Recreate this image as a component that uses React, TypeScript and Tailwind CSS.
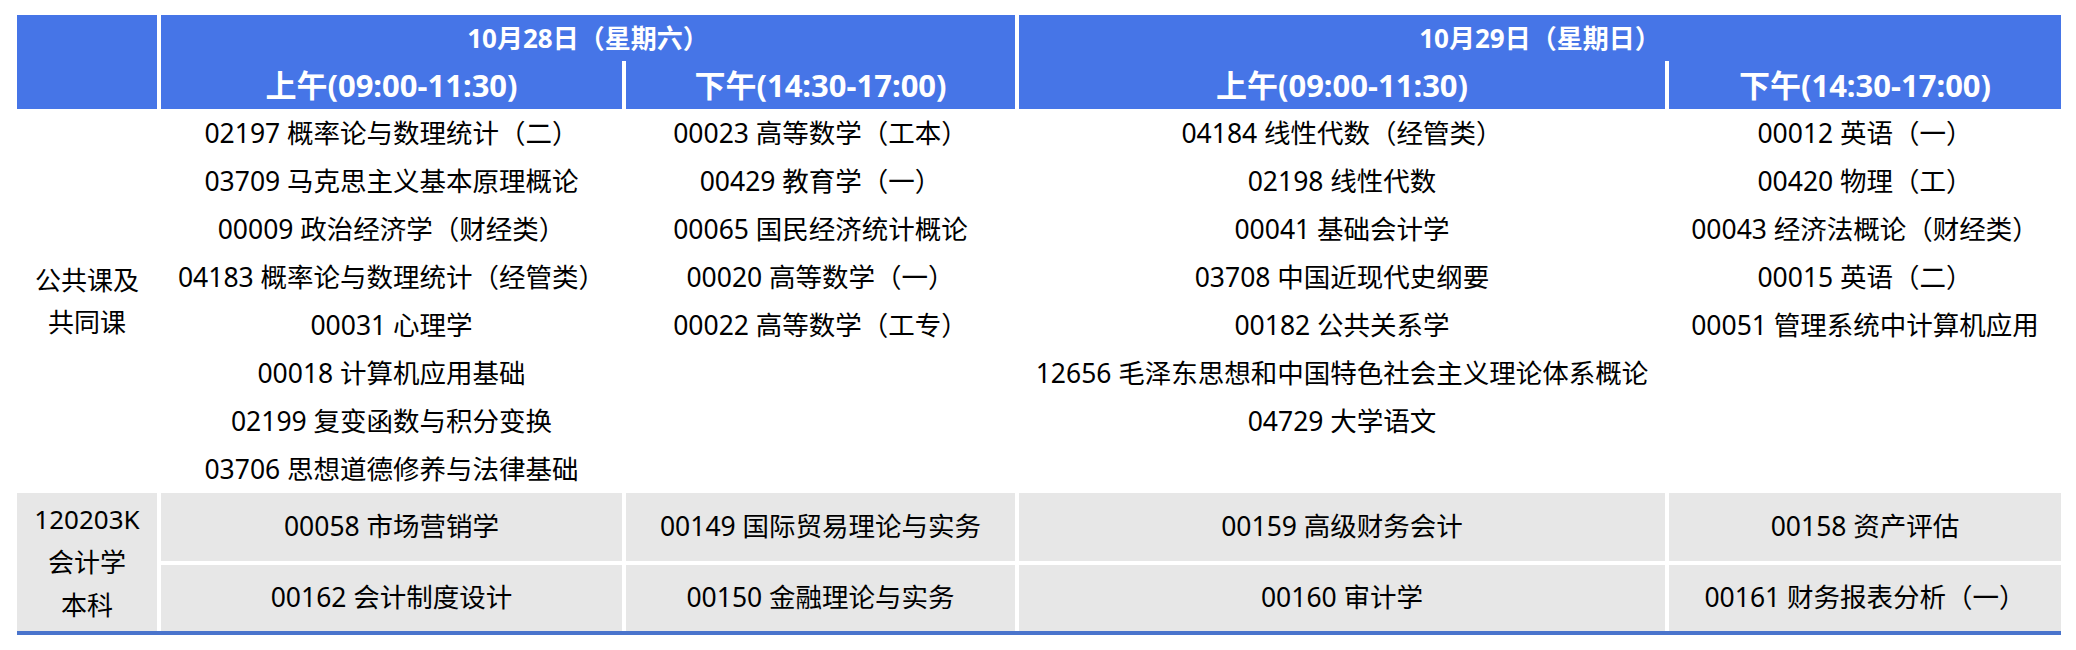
const days = [
  {
    date: '10月28日（星期六）',
    am: [
      '02197 概率论与数理统计（二）',
      '03709 马克思主义基本原理概论',
      '00009 政治经济学（财经类）',
      '04183 概率论与数理统计（经管类）',
      '00031 心理学',
      '00018 计算机应用基础',
      '02199 复变函数与积分变换',
      '03706 思想道德修养与法律基础',
    ],
    pm: [
      '00023 高等数学（工本）',
      '00429 教育学（一）',
      '00065 国民经济统计概论',
      '00020 高等数学（一）',
      '00022 高等数学（工专）',
    ],
  },
  {
    date: '10月29日（星期日）',
    am: [
      '04184 线性代数（经管类）',
      '02198 线性代数',
      '00041 基础会计学',
      '03708 中国近现代史纲要',
      '00182 公共关系学',
      '12656 毛泽东思想和中国特色社会主义理论体系概论',
      '04729 大学语文',
    ],
    pm: [
      '00012 英语（一）',
      '00420 物理（工）',
      '00043 经济法概论（财经类）',
      '00015 英语（二）',
      '00051 管理系统中计算机应用',
    ],
  },
];

const majorRows = [
  ['00058 市场营销学', '00149 国际贸易理论与实务', '00159 高级财务会计', '00158 资产评估'],
  ['00162 会计制度设计', '00150 金融理论与实务', '00160 审计学', '00161 财务报表分析（一）'],
];

const CourseList = ({ items }: { items: string[] }) => (
  <div className="flex flex-col items-center">
    {items.map((item) => (
      <p key={item} className="whitespace-nowrap text-[26.5px] leading-[48px]">
        {item}
      </p>
    ))}
  </div>
);

export default function App() {
  return (
    <div className="min-h-screen bg-white pl-[17px] pt-[15px] font-['Noto_Sans','Noto_Sans_CJK_SC',sans-serif] text-black">
      <div className="w-[2044px] border-b-4 border-[#4a74cc]">
        <div className="grid grid-cols-[140px_461px_389px_646px_392px] grid-rows-[46px_48px_384px_68px_4px_66px] gap-x-1">
          {/* header */}
          <div className="row-span-2 bg-[#4675e7]" />
          <div className="col-span-2 flex items-center justify-center bg-[#4675e7] text-[26px] font-bold text-white">
            {days[0].date}
          </div>
          <div className="col-span-2 flex items-center justify-center bg-[#4675e7] text-[26px] font-bold text-white">
            {days[1].date}
          </div>
          {days.map((day) => (
            <>
              <div key={day.date + 'am'} className="flex items-center justify-center bg-[#4675e7] text-[31px] font-bold text-white">
                上午(09:00-11:30)
              </div>
              <div key={day.date + 'pm'} className="flex items-center justify-center bg-[#4675e7] text-[31px] font-bold text-white">
                下午(14:30-17:00)
              </div>
            </>
          ))}

          {/* public courses */}
          <div className="flex items-center justify-center text-center text-[26px] leading-[42px]">
            <p>
              公共课及
              <br />
              共同课
            </p>
          </div>
          <CourseList items={days[0].am} />
          <CourseList items={days[0].pm} />
          <CourseList items={days[1].am} />
          <CourseList items={days[1].pm} />

          {/* major courses */}
          <div className="row-span-3 flex items-center justify-center bg-[#e7e7e7] text-center text-[26px] leading-[43px]">
            <p>
              120203K
              <br />
              会计学
              <br />
              本科
            </p>
          </div>
          {majorRows[0].map((course) => (
            <div key={course} className="flex items-center justify-center bg-[#e7e7e7] text-[26.5px]">
              {course}
            </div>
          ))}
          <div className="col-span-4" />
          {majorRows[1].map((course) => (
            <div key={course} className="flex items-center justify-center bg-[#e7e7e7] text-[26.5px]">
              {course}
            </div>
          ))}
        </div>
      </div>
    </div>
  );
}
